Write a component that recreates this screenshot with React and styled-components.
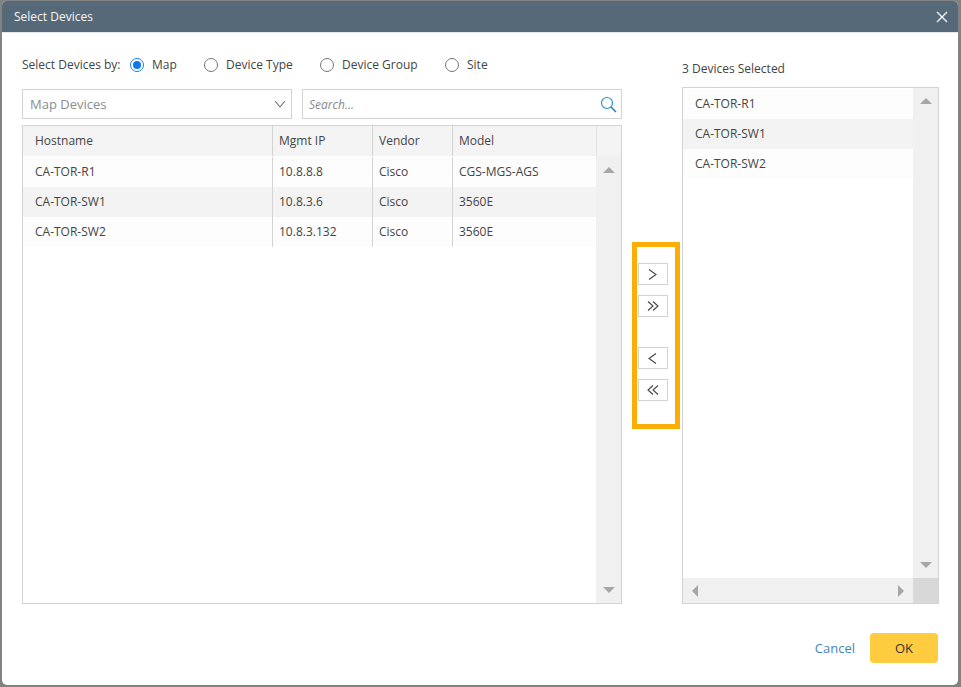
import styled, { createGlobalStyle } from 'styled-components';

const GlobalStyle = createGlobalStyle`
	html, body {
		margin: 0;
		padding: 0;
		height: 100%;
		background: #828282;
		overflow: hidden;
	}
	#root {
		height: 100%;
	}
	* {
		box-sizing: border-box;
	}
`;

const Pagina = styled.div`
	width: 961px;
	height: 687px;
	padding: 1px 3px 2px 2px;
	font-family: "Open Sans", "Liberation Sans", sans-serif;
	font-size: 12px;
	color: #444444;
`;

const Ventana = styled.div`
	width: 956px;
	height: 684px;
	background: #ffffff;
	border-radius: 5px;
	display: flex;
	flex-direction: column;
	overflow: hidden;
`;

const Cabecera = styled.div`
	height: 32px;
	flex: none;
	background: #566978;
	border-bottom: 1px solid #e4e8eb;
	color: #ffffff;
	display: flex;
	align-items: center;
	justify-content: space-between;
	padding: 0 10px 0 12px;
`;

const Titulo = styled.span`
	font-size: 12px;
	color: #f4f6f7;
`;

const BotonCerrar = styled.button`
	width: 12px;
	height: 12px;
	padding: 0;
	border: none;
	background: none;
	display: flex;
	cursor: pointer;
`;

const Contenido = styled.div`
	flex: none;
	height: 571px;
	display: flex;
	padding-left: 20px;
`;

const ColumnaIzquierda = styled.div`
	width: 600px;
	flex: none;
	display: flex;
	flex-direction: column;
	padding-top: 22px;
`;

const FilaRadios = styled.div`
	height: 20px;
	display: flex;
	align-items: center;
	color: #444444;
`;

const EtiquetaRadios = styled.span`
	width: 108px;
	flex: none;
`;

const OpcionRadio = styled.label`
	display: flex;
	align-items: center;
	gap: 8px;
	width: ${(props) => props.$ancho}px;
	flex: none;
`;

const Circulo = styled.span`
	width: 14px;
	height: 14px;
	flex: none;
	border-radius: 50%;
	border: 1px solid ${(props) => (props.$activo ? '#1a7fe0' : '#777777')};
	background: #ffffff;
	display: flex;
	align-items: center;
	justify-content: center;

	&::after {
		content: '';
		display: ${(props) => (props.$activo ? 'block' : 'none')};
		width: 8px;
		height: 8px;
		border-radius: 50%;
		background: #1078e8;
	}
`;

const FilaFiltros = styled.div`
	display: flex;
	gap: 10px;
	margin-top: 14px;
`;

const Selector = styled.div`
	width: 270px;
	height: 30px;
	border: 1px solid #d3d3d3;
	display: flex;
	align-items: center;
	justify-content: space-between;
	padding: 0 5px 0 7px;
	font-size: 13px;
	color: #8c8c8c;
`;

const Buscador = styled.div`
	width: 320px;
	height: 30px;
	border: 1px solid #d3d3d3;
	display: flex;
	align-items: center;
	justify-content: space-between;
	padding: 1px 4px 0 6px;
	font-style: italic;
	color: #8a8a8a;
`;

const Tabla = styled.div`
	margin-top: 6px;
	height: 480px;
	border: 1px solid #d3d3d3;
	display: flex;
`;

const ZonaTabla = styled.div`
	width: 573px;
	flex: none;
	display: flex;
	flex-direction: column;
`;

const Fila = styled.div`
	display: grid;
	grid-template-columns: 249px 100px 80px 144px;
	height: 30px;
	background: ${(props) => props.$fondo};
`;

const FilaCabecera = styled(Fila)`
	background: #f4f4f4;
	margin-bottom: 1px;
`;

const Celda = styled.div`
	display: flex;
	align-items: center;
	padding-left: ${(props) => (props.$primera ? '12px' : '6px')};
	border-left: ${(props) => (props.$primera ? 'none' : '1px solid #d3d3d3')};
	color: #444444;
`;

const HuecoCabecera = styled.div`
	width: 25px;
	height: 30px;
	background: #f4f4f4;
	border-left: 1px solid #e2e2e2;
`;

const BarraVertical = styled.div`
	flex: 1;
	background: #f0f0f0;
	display: flex;
	flex-direction: column;
	align-items: center;
	justify-content: space-between;
	padding: ${(props) => props.$arriba}px 0 10px;
`;

const ColumnaBarra = styled.div`
	width: 25px;
	flex: none;
	display: flex;
	flex-direction: column;
`;

const Flecha = styled.span`
	width: 0;
	height: 0;
	display: block;
	border-style: solid;
	border-color: transparent;
	${(props) => props.$dir === 'up' && 'border-width: 0 6px 6px; border-bottom-color: #a6a6a6;'}
	${(props) => props.$dir === 'down' && 'border-width: 6px 6px 0; border-top-color: #a6a6a6;'}
	${(props) => props.$dir === 'left' && 'border-width: 6px 6px 6px 0; border-right-color: #a6a6a6;'}
	${(props) => props.$dir === 'right' && 'border-width: 6px 0 6px 6px; border-left-color: #a6a6a6;'}
`;

const ColumnaCentro = styled.div`
	width: 60px;
	flex: none;
	padding: 209px 0 0 10px;
`;

const MarcoBotones = styled.div`
	width: 48px;
	height: 187px;
	border: 5px solid #fdae06;
	padding: 16px 0 0 1px;
	display: flex;
	flex-direction: column;
	gap: 10px;
`;

const BotonMover = styled.button`
	width: 30px;
	height: 22px;
	flex: none;
	padding: 0;
	background: #ffffff;
	border: 1px solid #d3d3d3;
	display: flex;
	align-items: center;
	justify-content: center;
	margin-top: ${(props) => (props.$separado ? '20px' : '0')};
`;

const ColumnaDerecha = styled.div`
	width: 257px;
	flex: none;
	padding-top: 27px;
	display: flex;
	flex-direction: column;
`;

const Contador = styled.div`
	height: 17px;
	line-height: 17px;
	margin-bottom: 10px;
	color: #444444;
`;

const Lista = styled.div`
	height: 517px;
	border: 1px solid #d3d3d3;
	display: grid;
	grid-template-columns: 230px 25px;
	grid-template-rows: 490px 25px;
`;

const ZonaLista = styled.div`
	padding-top: 1px;
`;

const ElementoLista = styled.div`
	height: 30px;
	display: flex;
	align-items: center;
	padding: 0 0 2px 12px;
	background: ${(props) => props.$fondo};
`;

const BarraHorizontal = styled.div`
	background: #f0f0f0;
	display: flex;
	align-items: center;
	justify-content: space-between;
	padding: 0 9px;
`;

const Esquina = styled.div`
	background: #d8d8d8;
`;

const Pie = styled.div`
	flex: 1;
	display: flex;
	align-items: flex-start;
	justify-content: flex-end;
	gap: 15px;
	padding: 29px 20px 0 0;
`;

const BotonCancelar = styled.button`
	height: 30px;
	border: none;
	background: none;
	padding: 0;
	font: inherit;
	font-size: 13px;
	color: #3f85c0;
	cursor: pointer;
`;

const BotonOk = styled.button`
	width: 68px;
	height: 30px;
	border: none;
	border-radius: 4px;
	background: #ffcc40;
	font: inherit;
	font-size: 13px;
	color: #333333;
	cursor: pointer;
`;

const IconoFlechas = ({ d }) => (
	<svg width="14" height="12" viewBox="0 0 14 12" fill="none" stroke="#444444" strokeWidth="1.1">
		{d.map((trazo) => (
			<path key={trazo} d={trazo} />
		))}
	</svg>
);

const dispositivos = [
	{ host: 'CA-TOR-R1', ip: '10.8.8.8', marca: 'Cisco', modelo: 'CGS-MGS-AGS' },
	{ host: 'CA-TOR-SW1', ip: '10.8.3.6', marca: 'Cisco', modelo: '3560E' },
	{ host: 'CA-TOR-SW2', ip: '10.8.3.132', marca: 'Cisco', modelo: '3560E' },
];

const fondos = ['#fdfdfd', '#f3f3f3', '#fdfdfd'];

const opciones = [
	{ texto: 'Map', ancho: 74, activo: true },
	{ texto: 'Device Type', ancho: 116 },
	{ texto: 'Device Group', ancho: 125 },
	{ texto: 'Site', ancho: 60 },
];

export default function App() {
	return (
		<Pagina>
			<GlobalStyle />
			<Ventana>
				<Cabecera>
					<Titulo>Select Devices</Titulo>
					<BotonCerrar aria-label="Close">
						<svg width="12" height="12" viewBox="0 0 12 12" stroke="#ffffff" strokeWidth="1.2">
							<path d="M1 1l10 10M11 1L1 11" />
						</svg>
					</BotonCerrar>
				</Cabecera>
				<Contenido>
					<ColumnaIzquierda>
						<FilaRadios>
							<EtiquetaRadios>Select Devices by:</EtiquetaRadios>
							{opciones.map((opcion) => (
								<OpcionRadio key={opcion.texto} $ancho={opcion.ancho}>
									<Circulo $activo={opcion.activo} />
									{opcion.texto}
								</OpcionRadio>
							))}
						</FilaRadios>
						<FilaFiltros>
							<Selector>
								Map Devices
								<svg width="12" height="8" viewBox="0 0 12 8" fill="none" stroke="#666666" strokeWidth="1.1">
									<path d="M1 1l5 6 5-6" />
								</svg>
							</Selector>
							<Buscador>
								Search...
								<svg width="17" height="17" viewBox="0 0 17 17" fill="none">
									<circle cx="7" cy="7" r="5.5" stroke="#2f8fd0" strokeWidth="1.2" />
									<path d="M11 11l5 5" stroke="#2f7fb8" strokeWidth="1.6" />
								</svg>
							</Buscador>
						</FilaFiltros>
						<Tabla>
							<ZonaTabla>
								<FilaCabecera>
									<Celda $primera>Hostname</Celda>
									<Celda>Mgmt IP</Celda>
									<Celda>Vendor</Celda>
									<Celda>Model</Celda>
								</FilaCabecera>
								{dispositivos.map((dispositivo, index) => (
									<Fila key={dispositivo.host} $fondo={fondos[index]}>
										<Celda $primera>{dispositivo.host}</Celda>
										<Celda>{dispositivo.ip}</Celda>
										<Celda>{dispositivo.marca}</Celda>
										<Celda>{dispositivo.modelo}</Celda>
									</Fila>
								))}
							</ZonaTabla>
							<ColumnaBarra>
								<HuecoCabecera />
								<BarraVertical $arriba={11}>
									<Flecha $dir="up" />
									<Flecha $dir="down" />
								</BarraVertical>
							</ColumnaBarra>
						</Tabla>
					</ColumnaIzquierda>
					<ColumnaCentro>
						<MarcoBotones>
							<BotonMover aria-label="Add">
								<IconoFlechas d={['M3 1.5l7 5-7 5']} />
							</BotonMover>
							<BotonMover aria-label="Add all">
								<IconoFlechas d={['M2 1.5l5 4.5-5 4.5', 'M7 1.5l5 4.5-5 4.5']} />
							</BotonMover>
							<BotonMover $separado aria-label="Remove">
								<IconoFlechas d={['M10 1.5L3 6.5l7 5']} />
							</BotonMover>
							<BotonMover aria-label="Remove all">
								<IconoFlechas d={['M7 1.5L2 6l5 4.5', 'M12 1.5L7 6l5 4.5']} />
							</BotonMover>
						</MarcoBotones>
					</ColumnaCentro>
					<ColumnaDerecha>
						<Contador>3 Devices Selected</Contador>
						<Lista>
							<ZonaLista>
								{dispositivos.map((dispositivo, index) => (
									<ElementoLista key={dispositivo.host} $fondo={fondos[index]}>
										{dispositivo.host}
									</ElementoLista>
								))}
							</ZonaLista>
							<BarraVertical $arriba={10}>
								<Flecha $dir="up" />
								<Flecha $dir="down" />
							</BarraVertical>
							<BarraHorizontal>
								<Flecha $dir="left" />
								<Flecha $dir="right" />
							</BarraHorizontal>
							<Esquina />
						</Lista>
					</ColumnaDerecha>
				</Contenido>
				<Pie>
					<BotonCancelar>Cancel</BotonCancelar>
					<BotonOk>OK</BotonOk>
				</Pie>
			</Ventana>
		</Pagina>
	);
}
